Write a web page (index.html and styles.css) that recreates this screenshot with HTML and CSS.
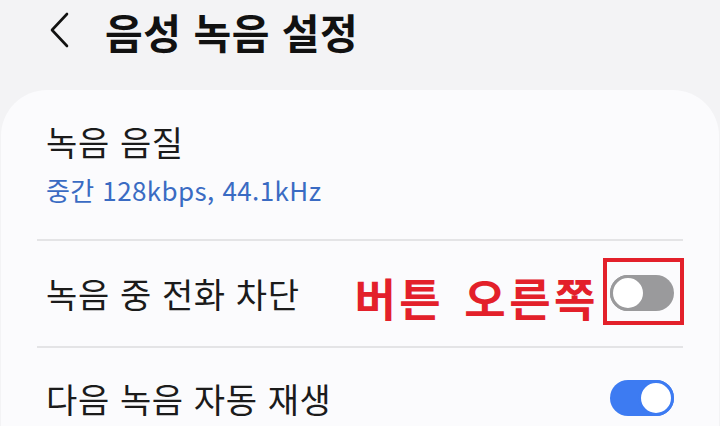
FILE: index.html
```html
<!DOCTYPE html>
<html lang="ko">
<head>
    <meta charset="UTF-8">
    <meta name="viewport" content="width=device-width, initial-scale=1.0">
    <title>음성 녹음 설정</title>
    <link rel="stylesheet" href="styles.css">
</head>
<body>
    <div class="header">
        <svg class="back" width="22" height="38" viewBox="0 0 22 38">
            <path d="M19 3 L4 19 L19 35" fill="none" stroke="#111" stroke-width="2.6" stroke-linecap="round" stroke-linejoin="round"/>
        </svg>
        <h1 class="title">음성 녹음 설정</h1>
    </div>

    <div class="card">
        <div class="row row-first">
            <div class="row-text">
                <div class="label">녹음 음질</div>
                <div class="sub">중간 128kbps, 44.1kHz</div>
            </div>
        </div>
        <div class="divider"></div>
        <div class="row row-mid">
            <div class="label">녹음 중 전화 차단</div>
            <div class="note">버튼 오른쪽</div>
            <div class="mark">
                <span class="switch"><span class="knob"></span></span>
            </div>
        </div>
        <div class="divider"></div>
        <div class="row row-last">
            <div class="label">다음 녹음 자동 재생</div>
            <span class="switch on"><span class="knob"></span></span>
        </div>
    </div>
</body>
</html>
```

FILE: styles.css
```css
body {
    margin: 0;
    height: 426px;
    overflow: hidden;
    background-color: #f3f3f5;
    font-family: "Noto Sans CJK KR", "Noto Sans", sans-serif;
    color: #1b1b1b;
}
.header {
    display: flex;
    align-items: center;
    height: 62px;
    padding-left: 48px;
    margin-bottom: 28px;
}
.back {
    margin-top: -2px;
}
.title {
    margin: 0 0 0 35px;
    font-size: 41px;
    font-weight: 700;
    letter-spacing: 0.5px;
    color: #111;
}
.card {
    background: #fbfbfd;
    margin: 0 1px;
    border-radius: 46px 46px 0 0;
    padding: 0 36px;
    height: 336px;
}
.row {
    display: flex;
    align-items: center;
    padding: 0 9px;
}
.row-first {
    height: 149px;
    align-items: flex-start;
}
.row-first .row-text {
    padding-top: 30px;
}
.row-mid {
    height: 105px;
}
.row-last {
    height: 76px;
    align-items: flex-start;
}
.row-last .label {
    margin-top: 29px;
}
.row-last .switch {
    margin-top: 32px;
    margin-left: auto;
}
.label {
    font-size: 34px;
    line-height: 44px;
    letter-spacing: 0.6px;
}
.sub {
    margin-top: 9px;
    font-size: 26px;
    line-height: 34px;
    color: #3a6bc3;
    letter-spacing: 0.4px;
}
.divider {
    height: 2px;
    background: #e4e4e6;
}
.note {
    margin-left: auto;
    margin-right: 4px;
    font-size: 45px;
    font-weight: 700;
    letter-spacing: 3.5px;
    word-spacing: 4px;
    color: #e3202a;
    margin-top: 8px;
}
.mark {
    border: 4px solid #e3202a;
    padding: 13px 6px 10px 3px;
    margin-right: -10px;
    margin-top: -4px;
    display: flex;
}
.switch {
    position: relative;
    display: block;
    width: 64px;
    height: 36px;
    border-radius: 18px;
    background: #9a9a9c;
}
.knob {
    position: absolute;
    left: 0;
    top: 0;
    width: 30px;
    height: 30px;
    border-radius: 50%;
    background: #fff;
    border: 3px solid #9a9a9c;
}
.switch.on {
    background: #3d7bf2;
}
.switch.on .knob {
    left: auto;
    right: 0;
    border-color: #3d7bf2;
}
```
